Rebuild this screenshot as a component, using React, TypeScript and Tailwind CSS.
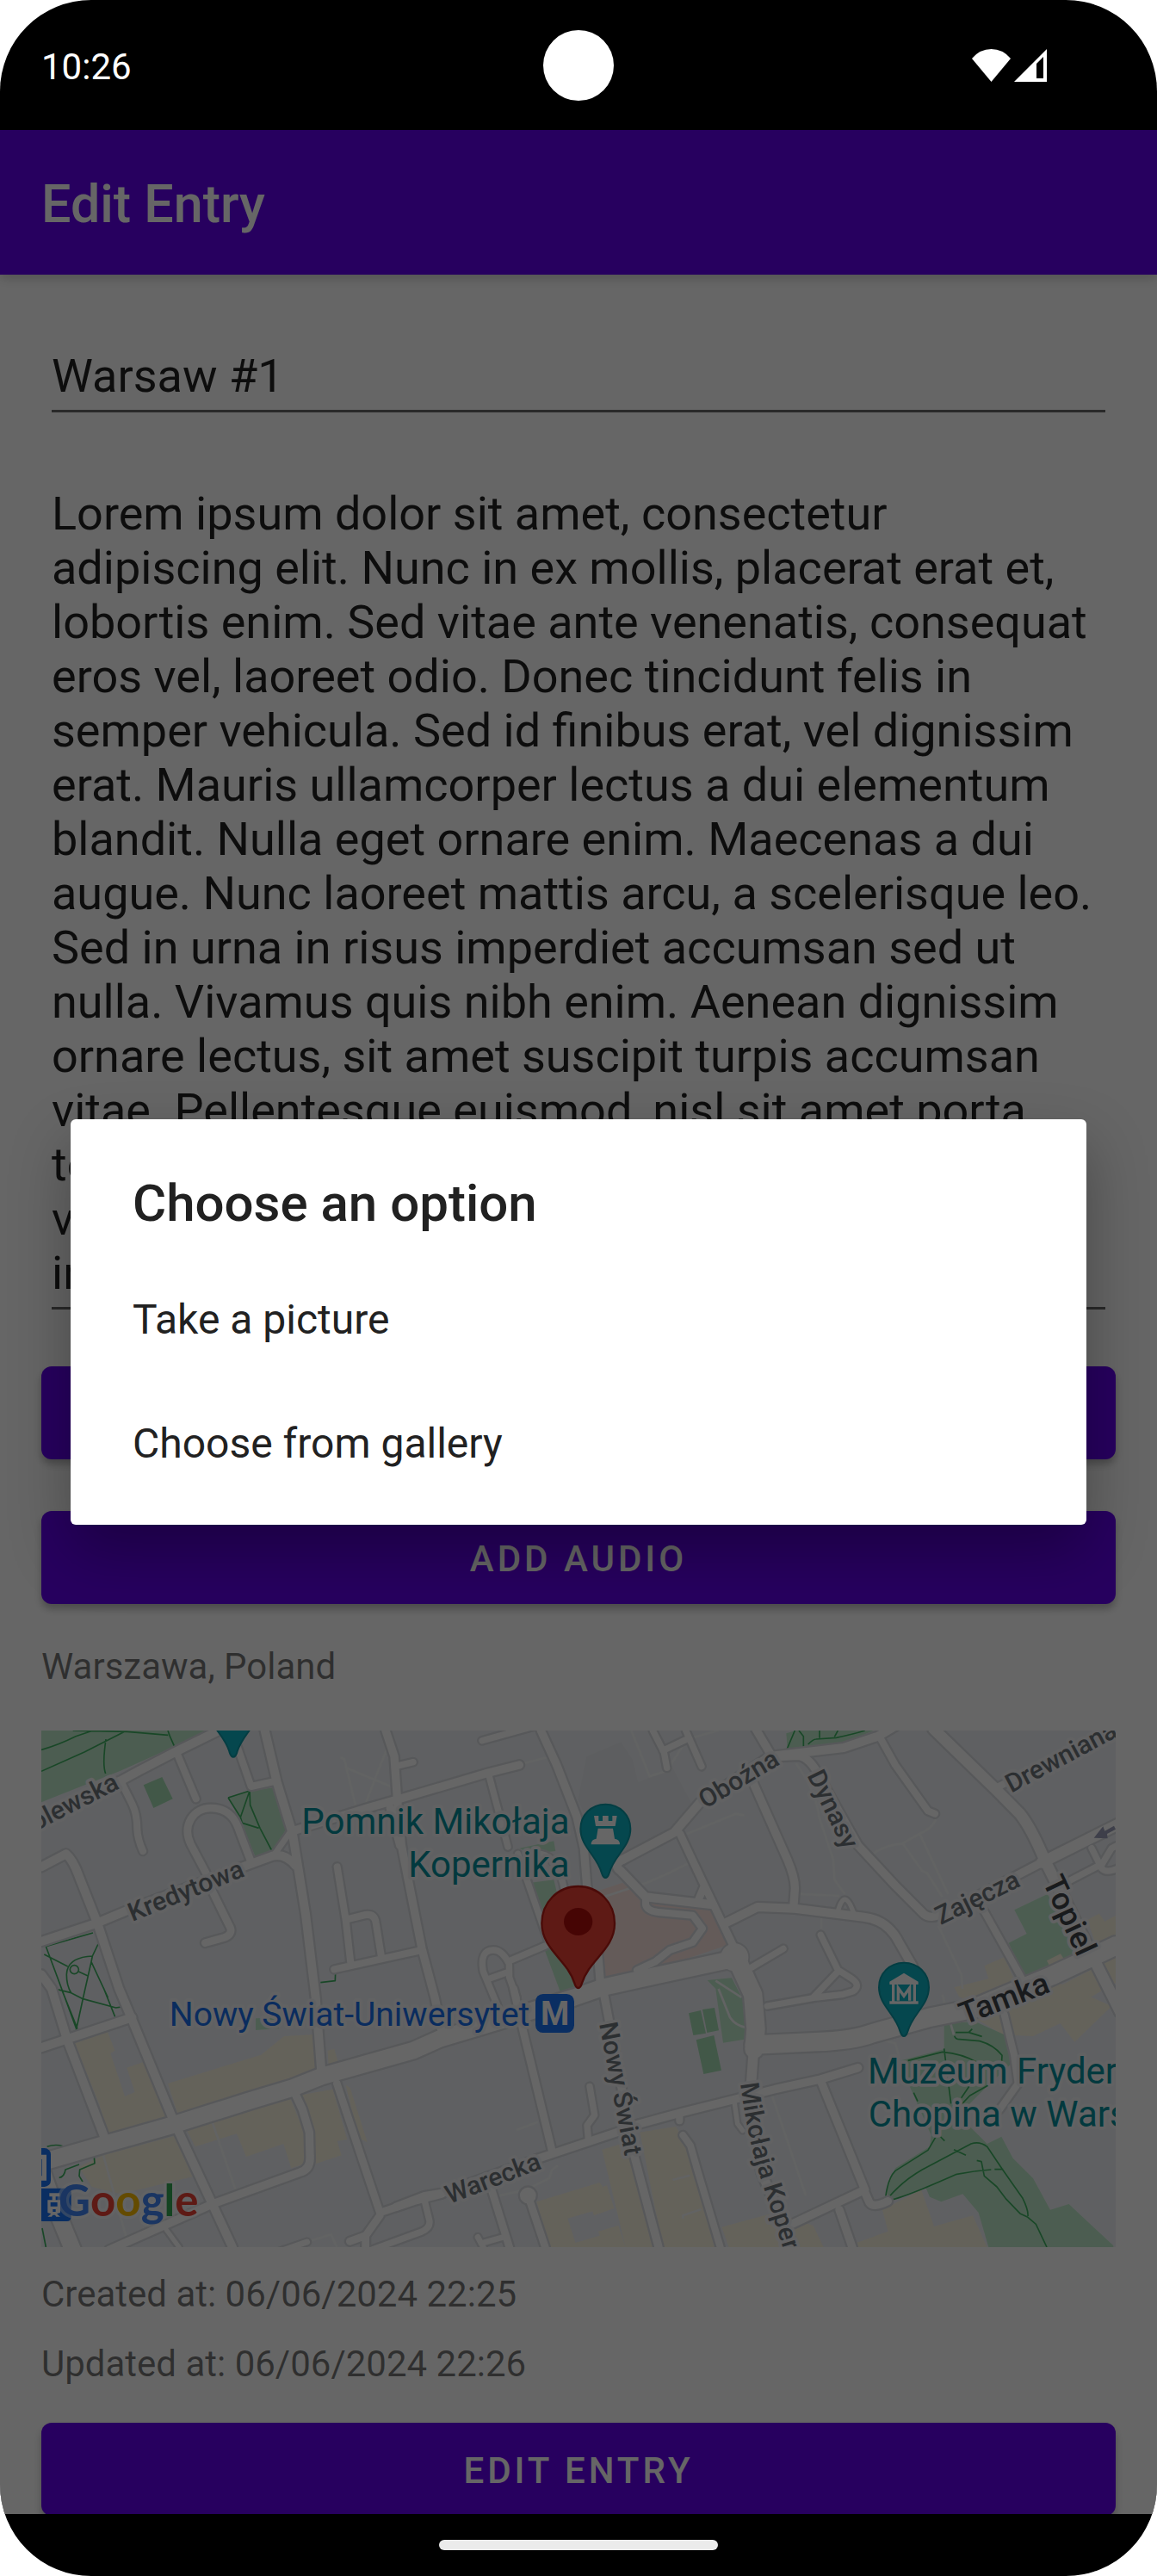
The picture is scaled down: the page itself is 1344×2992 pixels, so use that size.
import type { ReactNode } from "react";

type Road = { d: string; w: number };

const roads: Road[] = [
  { w: 20, d: "M870 350L810 435" },
  { w: 16, d: "M2776 630Q2800 540 2834 645M436 1740L480 1800M2416 1300L2426 1370L2444 1394" },
  { w: 22, d: "M1536 35L1736 -20M1561 160L1626 405M1246 122L1296 110" },
  { w: 22, d: "M2131 0L2170 76L2180 130M2246 0L2301 125M2166 70L2250 30" },
  { w: 22, d: "M2530 960L2700 930L2790 920L2830 908Q2856 888 2826 866L2776 834L2716 712M2776 840L2690 930M2476 825L2586 760" },
  { w: 22, d: "M3660 410L3695 480Q3712 500 3756 478M3580 525L3690 468M3694 470L3730 410L3750 400" },
  { w: 22, d: "M1911 1240L1928 1340L1902 1376L1906 1420M1336 1640L1352 1705Q1358 1732 1326 1746L1150 1810" },
  { w: 20, d: "M1521 1765L1540 1800M1540 1785L1610 1765M926 1782L830 1815" },
  { w: 24, d: "M276 175L316 255Q334 290 334 345Q336 380 354 420M471 75L539 238" },
  { w: 26, d: "M596 560L581 510L520 395C490 330 530 270 590 270C660 270 680 320 690 350L728 450M596 560L658 686Q668 710 636 722L571 740" },
  { w: 24, d: "M660 -10L731 195L821 175" },
  { w: 24, d: "M1031 475L1061 660L1078 810M1064 658L1130 642Q1162 638 1166 670L1186 795M1021 832L1236 785L1326 765" },
  { w: 22, d: "M1661 430L1770 745M1740 430Q1810 440 1830 600M1756 750L1626 805M1590 960L1540 840Q1526 765 1576 765Q1606 765 1630 812L1631 860L1656 930M1560 865L1625 842" },
  { w: 26, d: "M1646 900L1680 1050L1781 1470" },
  { w: 28, d: "M876 350L1136 270L1260 235L1556 148L1666 120" },
  { w: 28, d: "M1200 0L1230 90L1242 260L1255 400L1326 760L1371 930L1396 1050M1216 270L1250 400" },
  { w: 28, d: "M1741 0L1796 120L1866 300L1891 410L1901 540L1940 780L1948 880M1961 920L1980 1020L2066 1480L2151 1800" },
  { w: 24, d: "M2106 585L2106 606Q2110 630 2160 634L2270 644L2304 690L2270 738L2190 765L2140 805L2076 835" },
  { w: 30, d: "M2026 450L2206 355L2296 250L2540 90L2796 60L2916 20L3000 -30" },
  { w: 30, d: "M2026 450Q1990 470 2020 490L2106 580L2340 607" },
  { w: 26, d: "M2226 360L2306 530L2416 760M2311 540L2290 590" },
  { w: 30, d: "M2386 670L2496 615L2626 620L2866 650Q2950 660 2990 740L3036 820" },
  { w: 28, d: "M2490 -5L2546 90M2480 180L2600 450Q2626 510 2626 550L2621 620" },
  { w: 28, d: "M2556 92L2640 88Q2680 95 2711 160L2846 400L2976 540L3076 640Q3100 660 3150 635L3486 460" },
  { w: 24, d: "M2926 30L2976 120L3090 280L3114 290M3326 200L3744 0" },
  { w: 38, d: "M3110 -5L3326 205L3410 290Q3450 340 3496 450L3556 570L3680 820L3760 980M3486 460L3756 325" },
  { w: 24, d: "M3286 630L3426 880M3356 990L3390 1130L3404 1230L3340 1320" },
  { w: 28, d: "M236 1810L596 1650L900 1540Q940 1530 936 1480L934 1400L910 1320L880 1255" },
  { w: 26, d: "M1030 1230L1180 1680L1300 1640L1396 1615M1180 1690L1130 1760L1075 1780M1130 1760L1130 1800" },
  { w: 28, d: "M1236 1660L1336 1622L1396 1612L1736 1490L1781 1475L2006 1400L2086 1370L2236 1330L2556 1250L2716 1215L2846 1175" },
  { w: 26, d: "M1566 1590L1631 1800M1696 1620L1756 1800" },
  { w: 24, d: "M2224 1340L2224 1360M2236 1410L2262 1446L2286 1530L2366 1800" },
  { w: 28, d: "M2716 1220L2870 1600L2616 1720M2866 1600L2886 1645Q2900 1665 2950 1640M2781 1670L2826 1800" },
  { w: 32, d: "M2470 1280L2510 1540L2620 1800" },
  { w: 30, d: "M0 310L276 175L341 140L466 75L700 -40" },
  { w: 30, d: "M0 735L191 672L316 620L716 470L806 437Q850 427 886 470" },
  { w: 30, d: "M0 475L86 430Q110 450 130 505L195 670L271 900L311 995L461 1360L596 1650L666 1800" },
  { w: 30, d: "M0 850L36 900L91 1080L221 1420M0 1105L91 1075L316 1000" },
  { w: 30, d: "M779 0L821 180L876 360L921 640L956 930L976 1190" },
  { w: 58, d: "M0 1505L226 1440L456 1375L726 1290L876 1245L976 1205L1296 1115L1386 1075L1636 1000L1856 930L1956 895L2136 855L2416 795" },
  { w: 64, d: "M2416 780L2480 920L2490 1040L2484 1110M2484 1095L2700 1085Q2830 1080 2896 1055L3096 1000L3246 970L3400 905L3520 855L3744 750" },
  { w: 34, d: "M2484 1090L2470 1280" },
  { w: 56, d: "M-10 1500L40 1640L110 1810" },
];

const beige = [
  "116,1090 231,1050 256,1115 241,1125 291,1275 326,1260 298,1175 356,1155 441,1350 236,1412 201,1300",
  "441,1230 766,1130 846,1065 946,1060 961,1190 476,1338",
  "506,1390 866,1278 916,1400 916,1510 871,1525 844,1440 714,1485 681,1405 536,1450",
  "906,1270 1016,1250 1066,1425 1031,1430 1046,1480 956,1510 946,1400",
  "131,1520 216,1480 466,1412 526,1555 276,1615 176,1590",
  "1061,1235 1076,1245 1136,1435 1106,1420",
  "998,1115 1021,1110 1034,1155 1001,1168",
  "1726,1642 1946,1575 1956,1590 1971,1585 1996,1665 1926,1690 1921,1675 1834,1700 1861,1785 1946,1760 1941,1745 2011,1725 2036,1800 1771,1800",
  "1954,1460 2056,1430 2141,1800 2036,1800",
  "2086,1400 2211,1380 2236,1420 2346,1800 2166,1800",
  "2371,1730 2556,1680 2690,1725 2726,1800 2396,1800",
  "3286,820 3356,790 3396,880 3200,930 3181,895 3301,865",
  "3646,660 3686,638 3706,665 3744,645 3744,715 3676,750",
  "3200,920 3500,860 3730,960 3601,1085 3551,1020 3456,1065 3350,1060 3250,1000",
  "3530,900 3744,790 3744,880 3600,960",
  "2841,1785 2951,1745 2931,1670 3066,1600 3111,1728 3246,1690 3296,1800 2841,1800",
];

const parks = [
  "0,0 590,0 466,55 276,140 0,250",
  "651,232 726,210 816,198 856,340 806,420 746,440 696,320",
  "1666,410 1786,385 1792,420 1706,430",
  "1706,530 1786,520 1860,830 1856,905 1810,915 1756,770",
  "2321,870 2406,862 2446,940 2461,1075 2376,1088 2350,900",
  "2596,10 2630,0 2900,0 2800,44 2600,66",
  "3391,625 3506,570 3636,780 3431,870 3371,740 3434,708",
  "747,1003 830,1000 828,1038 747,1044",
  "3146,1020 3256,1015 3356,1060 3381,1160 3296,1240 3236,1300 3196,1340 3276,1420 3296,1440 3346,1415 3386,1490 3456,1560 3516,1670 3581,1650 3736,1795 3736,1800 3301,1800 3266,1680 3211,1615 3136,1642 3096,1625 3081,1590 2951,1640 2946,1600 2976,1525 3096,1450 3101,1410 3026,1240 2996,1150 3146,1110",
];

const pitches = [
  "356,190 421,162 458,238 391,270",
  "2256,985 2298,975 2316,1055 2272,1062",
  "2304,972 2346,966 2361,1045 2320,1053",
  "2282,1078 2344,1062 2370,1184 2308,1197",
];

const trails = [
  "M0 67Q60 50 120 20L180 0M110 0L300 4L442 16M0 142L150 75L290 4M225 30Q212 120 224 150M441 0L448 20L464 56",
  "M651 234L726 210L694 302L651 234M726 210L728 260L762 340L804 420M694 302L700 322L758 340",
  "M973 878L1024 872L1025 842",
  "M16 752L180 705M16 752L82 930L126 1050M10 780L92 822M130 840L164 856M198 744L178 786L174 806L232 930M178 786Q90 790 88 850Q88 890 104 914M55 902L104 914L145 935L260 966L286 962M174 806L146 930L120 1050M72 905L126 1040M218 900L258 1000",
  "M20 1450Q60 1436 98 1458L170 1432L206 1412M184 1486L186 1508L134 1530L132 1552L144 1572M62 1558Q80 1556 84 1530L132 1512",
  "M2598 66L2626 0M2640 0L2656 20L2656 58M2672 48Q2690 30 2700 30L2770 25Q2840 10 2870 0M2764 22L2776 0M2712 0L2712 26",
  "M3186 1052L3232 1052L3244 1040M3232 1052L3278 1066M3182 1064Q3186 1076 3200 1076L3270 1082Q3320 1096 3348 1132L3346 1166",
  "M3020 1150L3140 1120Q3210 1126 3260 1156M3146 1108L3170 1300M3300 1236L3236 1272L3200 1310M3240 1230L3206 1280M3040 1262L3054 1292",
  "M2942 1628Q2950 1560 2976 1534L3090 1462L3118 1414M2950 1630Q3000 1570 3070 1530L3240 1440Q3270 1430 3296 1450L3350 1530L3420 1630Q3440 1670 3438 1692M2952 1638Q3010 1626 3190 1546Q3250 1534 3310 1530M3322 1529L3352 1529M3260 1498L3276 1502L3286 1552L3330 1590L3360 1630L3412 1684L3438 1696L3466 1720L3504 1800M3180 1460L3222 1480M3134 1416L3148 1430",
  "M3 1734L16 1800",
];

const paths = [
  "M1042 94L1056 100L1096 265M1062 130L1216 194M1206 60L1170 150L1126 265",
  "M1680 115L1790 86M2056 0L2120 160L2180 140L2250 30L2360 0M1960 580L2110 530L2180 500L2270 455M2250 360L2420 290L2450 296",
  "M2630 115Q2700 210 2710 300L2730 360L2760 450L2764 520L2800 570M2646 570L2780 576M3118 310Q3100 345 3060 360L3000 394Q2930 400 2892 436M3002 394L3070 490L3086 496L3140 580M3062 362L3160 570M3126 680L3206 850L3210 900M2718 650L2718 690",
  "M596 1365L680 1610M216 1480L300 1780M926 1782L1010 1756L1030 1800",
  "M1656 1392L1730 1364M1590 1622L1690 1600L1770 1560L1780 1530L1800 1516M2546 1270L2664 1620M2200 1566L2260 1550M2236 1700L2236 1690L2300 1668",
  "M2360 900L2400 1000Q2420 1030 2460 1036M2350 872L2440 930M3140 920L3180 1060M2936 1080L2976 1090L2990 1140",
];

function StreetName({
  x,
  y,
  angle,
  major = false,
  end = false,
  children,
}: {
  x: number;
  y: number;
  angle: number;
  major?: boolean;
  end?: boolean;
  children: ReactNode;
}) {
  return (
    <text
      transform={`translate(${x} ${y}) rotate(${angle})`}
      fontSize={major ? 108 : 90}
      fontWeight={500}
      textAnchor={end ? "end" : "start"}
      fill={major ? "#3f444a" : "#6f757c"}
    >
      {children}
    </text>
  );
}

function PoiPin({ x, y, children }: { x: number; y: number; children?: ReactNode }) {
  return (
    <g transform={`translate(${x} ${y})`}>
      <path
        d="M0 -88C50 -88 87 -50 87 -2C87 60 30 90 13 152Q8 168 0 168Q-8 168 -13 152C-30 90 -87 60 -87 -2C-87 -50 -50 -88 0 -88Z"
        fill="#0eb2c3"
        stroke="#0c98a6"
        strokeWidth="6"
      />
      {children}
    </g>
  );
}

function CityMap() {
  return (
    <svg
      viewBox="0 0 3744 1800"
      preserveAspectRatio="xMidYMid slice"
      className="block h-[600px] w-full font-[Roboto,sans-serif]"
      role="img"
      aria-label="Map of Warszawa, Poland"
    >
      <rect width="3744" height="1800" fill="#eef1f5" />
      <path d="M1900 90L2020 40L2060 100L2080 180L2200 130L2280 280L2200 350L2020 440L1930 380L1870 240Z" fill="#e9ecef" />
      <g fill="#fbf4e0">
        {beige.map((p) => (
          <polygon key={p} points={p} />
        ))}
      </g>
      <polygon points="1936,560 2026,530 2096,590 2346,610 2400,745 2086,850 1966,865" fill="#fae3df" />
      <g fill="#bfe9ca">
        {parks.map((p) => (
          <polygon key={p} points={p} />
        ))}
      </g>
      <g fill="#a6dcb4">
        {pitches.map((p) => (
          <polygon key={p} points={p} />
        ))}
      </g>
      <polygon points="3504,802 3552,778 3568,804 3520,832" fill="#fbf4e0" />
      <g fill="none" stroke="#f4f7f7" strokeWidth="8" strokeLinejoin="round">
        {paths.map((d) => (
          <path key={d} d={d} />
        ))}
      </g>
      <g fill="none" stroke="#3fb263" strokeWidth="5" strokeLinejoin="round">
        {trails.map((d) => (
          <path key={d} d={d} />
        ))}
        <circle cx="115" cy="833" r="15" />
      </g>
      <g fill="none" stroke="#dadde1" strokeLinecap="round" strokeLinejoin="round">
        {roads.map((r) => (
          <path key={r.d} d={r.d} strokeWidth={r.w + 14} />
        ))}
        <circle cx="1696" cy="1620" r="16" strokeWidth="38" />
        <circle cx="2416" cy="790" r="24" strokeWidth="60" />
      </g>
      <g fill="none" stroke="#ffffff" strokeLinecap="round" strokeLinejoin="round">
        {roads.map((r) => (
          <path key={r.d} d={r.d} strokeWidth={r.w} />
        ))}
        <circle cx="1696" cy="1620" r="16" strokeWidth="24" />
        <circle cx="2416" cy="790" r="24" strokeWidth="48" />
      </g>
      <path d="M3668 374L3700 334L3706 350L3738 332L3744 344L3714 360L3716 376Z" fill="#9b9fb8" />

      <g stroke="#f4f6f8" strokeWidth="22" strokeLinejoin="round" paintOrder="stroke">
        <StreetName x={276} y={200} angle={-27} end>Królewska</StreetName>
        <StreetName x={317} y={666} angle={-22}>Kredytowa</StreetName>
        <StreetName x={2314} y={274} angle={-31}>Oboźna</StreetName>
        <StreetName x={2668} y={156} angle={64}>Dynasy</StreetName>
        <StreetName x={3380} y={218} angle={-28}>Drewniana</StreetName>
        <StreetName x={3134} y={678} angle={-26}>Zajęcza</StreetName>
        <StreetName x={1944} y={1022} angle={79}>Nowy Świat</StreetName>
        <StreetName x={1422} y={1650} angle={-21}>Warecka</StreetName>
        <StreetName x={3488} y={526} angle={65} major>Topiel</StreetName>
        <StreetName x={3216} y={1026} angle={-21} major>Tamka</StreetName>
        <path id="kopernika" d="M2436 1230C2452 1360 2478 1480 2520 1600L2634 1960" fill="none" stroke="none" />
        <text fontSize="90" fontWeight="500" fill="#6f757c">
          <textPath href="#kopernika">Mikołaja Kopernika</textPath>
        </text>
        <g fontSize="126" fill="#07909b">
          <text x="1841" y="360" textAnchor="end">Pomnik Mikołaja</text>
          <text x="1841" y="510" textAnchor="end">Kopernika</text>
          <text x="2880" y="1230">Muzeum Fryderyka</text>
          <text x="2882" y="1380">Chopina w Warszawie</text>
        </g>
        <text x="1702" y="1030" fontSize="117" textAnchor="end" fill="#1a6fea">
          Nowy Świat-Uniwersytet
        </text>
      </g>

      <rect x="1722" y="918" width="135" height="135" rx="26" fill="#1a73f4" />
      <text x="1790" y="1027" fontSize="114" fontWeight="700" textAnchor="middle" fill="#ffffff">M</text>

      <PoiPin x={669} y={-76} />
      <PoiPin x={1966} y={345}>
        <path
          d="M-40 -48H-24V-30H-10V-48H10V-30H24V-48H40L34 -12H-34ZM-26 -4H26L32 32Q50 34 50 52H-50Q-50 34 -32 32Z"
          fill="#ffffff"
        />
      </PoiPin>
      <PoiPin x={3006} y={897}>
        <path d="M0 -52L50 -22V-12H42V46H50V56H-50V46H-42V-12H-50V-22Z" fill="#ffffff" />
        <path d="M-32 -12V46H32V-12Z" fill="#0eb2c3" />
        <path d="M-20 44V0L0 28L20 0V44" fill="none" stroke="#ffffff" strokeWidth="10" />
      </PoiPin>
      <path
        d="M1871 543C1943 543 1998 600 1998 672C1998 762 1908 800 1884 880Q1880 897 1871 897Q1862 897 1858 880C1834 800 1744 762 1744 672C1744 600 1799 543 1871 543Z"
        fill="#ea4335"
        stroke="#b91c16"
        strokeWidth="7"
      />
      <ellipse cx="1871" cy="666" rx="50" ry="48" fill="#b00e0c" />

      <rect x="-60" y="1455" width="93" height="135" rx="22" fill="#1a73f4" />
      <path d="M0 1486H10V1560H0" fill="none" stroke="#ffffff" strokeWidth="16" />
      <rect x="-10" y="1595" width="114" height="115" rx="14" fill="#1a73f4" />
      <g fill="#ffffff">
        <path d="M28 1612H64V1624H50V1636H66V1680L54 1684L66 1694H52L48 1688H40L36 1694H22L34 1684L22 1680V1636H38V1624H28Z" />
        <path d="M32 1644H56V1658H32ZM40 1668H50V1677H40Z" fill="#1a73f4" />
      </g>
      <text
        x="60"
        y="1693"
        fontSize="153"
        fontWeight="700"
        stroke="#ffffff"
        strokeOpacity="0.45"
        strokeWidth="20"
        strokeLinejoin="round"
        paintOrder="stroke"
        className="font-[Lato,sans-serif]"
      >
        <tspan fill="#4285f4">G</tspan>
        <tspan fill="#ea4335">o</tspan>
        <tspan fill="#fbbc04">o</tspan>
        <tspan fill="#4285f4">g</tspan>
        <tspan fill="#34a853">l</tspan>
        <tspan fill="#ea4335">e</tspan>
      </text>
    </svg>
  );
}

const description = [
  "Lorem ipsum dolor sit amet, consectetur",
  "adipiscing elit. Nunc in ex mollis, placerat erat et,",
  "lobortis enim. Sed vitae ante venenatis, consequat",
  "eros vel, laoreet odio. Donec tincidunt felis in",
  "semper vehicula. Sed id finibus erat, vel dignissim",
  "erat. Mauris ullamcorper lectus a dui elementum",
  "blandit. Nulla eget ornare enim. Maecenas a dui",
  "augue. Nunc laoreet mattis arcu, a scelerisque leo.",
  "Sed in urna in risus imperdiet accumsan sed ut",
  "nulla. Vivamus quis nibh enim. Aenean dignissim",
  "ornare lectus, sit amet suscipit turpis accumsan",
  "vitae. Pellentesque euismod, nisl sit amet porta",
  "tempus, lectus nulla ornare augue, sed",
  "viverra nunc leo a lorem. Nulla facilisi",
  "in hac habitasse platea dictumst.",
].join("\n");

function FilledButton({ children }: { children: ReactNode }) {
  return (
    <button
      type="button"
      className="h-[108px] w-full shrink-0 rounded-xl bg-[#6200ee] pt-1 text-[42px] leading-[48px] font-medium tracking-[4px] text-white uppercase shadow-[0_6px_9px_rgba(0,0,0,0.25)]"
    >
      {children}
    </button>
  );
}

function StatusBar() {
  return (
    <div className="relative flex h-[151px] shrink-0 items-center justify-between pr-32 pl-12 text-white">
      <time className="pt-1 text-[42px] leading-[48px]">10:26</time>
      <span className="absolute top-[35px] left-1/2 size-[82px] -translate-x-1/2 rounded-full bg-white" />
      <span className="flex items-center gap-1">
        <svg width="45" height="38" viewBox="0 0 45 38" aria-label="Wi-Fi">
          <path d="M22.500 38L0 11Q9 0 22.500 0Q36 0 45 11Z" fill="currentColor" />
        </svg>
        <svg width="38" height="38" viewBox="0 0 38 38" aria-label="Signal">
          <path d="M38 0V38H0ZM34 9L26 17V34H34Z" fill="currentColor" fillRule="evenodd" />
        </svg>
      </span>
    </div>
  );
}

export default function App() {
  return (
    <div className="bg-white font-[Roboto,sans-serif]">
      <div className="flex h-screen flex-col overflow-hidden rounded-[106px] bg-black">
        <StatusBar />

        <div className="relative flex min-h-0 flex-1 flex-col bg-white">
          <header className="z-10 flex h-[168px] shrink-0 items-center bg-[#6200ee] px-12 pt-1 shadow-[0_4px_12px_rgba(0,0,0,0.2)]">
            <h1 className="text-[61px] leading-[72px] font-medium text-white">Edit Entry</h1>
          </header>

          <main className="flex min-h-0 flex-1 flex-col overflow-hidden px-12 pt-[86px]">
            <div className="flex shrink-0 flex-col px-3">
              <input
                aria-label="Title"
                defaultValue="Warsaw #1"
                className="h-[74px] w-full border-b-3 border-black/60 pb-2 text-[54px] leading-[63px] text-black/87 outline-none"
              />
              <textarea
                aria-label="Description"
                rows={15}
                defaultValue={description}
                className="mt-[86px] block w-full resize-none overflow-hidden border-b-3 border-black/60 pb-2 text-[54px] leading-[63px] text-black/87 outline-none"
              />
            </div>

            <div className="mt-[66px] flex shrink-0 flex-col gap-[60px]">
              <FilledButton>Add image</FilledButton>
              <FilledButton>Add audio</FilledButton>
            </div>

            <p className="mt-12 mb-[50px] shrink-0 text-[42px] leading-[49px] text-black/54">Warszawa, Poland</p>
            <div className="shrink-0">
              <CityMap />
            </div>
            <div className="mt-[30px] mb-[44px] flex shrink-0 flex-col gap-8 text-[42px] leading-[49px] text-black/54">
              <p>Created at: 06/06/2024 22:25</p>
              <p>Updated at: 06/06/2024 22:26</p>
            </div>
            <FilledButton>Edit entry</FilledButton>
          </main>

          <div className="absolute inset-0 z-20 flex items-center justify-center overflow-hidden bg-black/60 px-[82px]">
            <div
              role="dialog"
              aria-modal="true"
              aria-labelledby="dialog-title"
              className="w-full rounded-md bg-white pt-[62px] pb-[22px] text-[#212121] shadow-[0_30px_70px_rgba(0,0,0,0.3)]"
            >
              <h2 id="dialog-title" className="mb-[27px] px-[72px] text-[60px] leading-[72px] font-medium">
                Choose an option
              </h2>
              <button type="button" className="block h-36 w-full px-[72px] text-left text-[48px] leading-[56px]">
                Take a picture
              </button>
              <button type="button" className="block h-36 w-full px-[72px] text-left text-[48px] leading-[56px]">
                Choose from gallery
              </button>
            </div>
          </div>
        </div>

        <div className="flex h-[72px] shrink-0 items-center justify-center">
          <span className="h-3 w-[324px] rounded-md bg-[#ebebeb]" />
        </div>
      </div>
    </div>
  );
}
